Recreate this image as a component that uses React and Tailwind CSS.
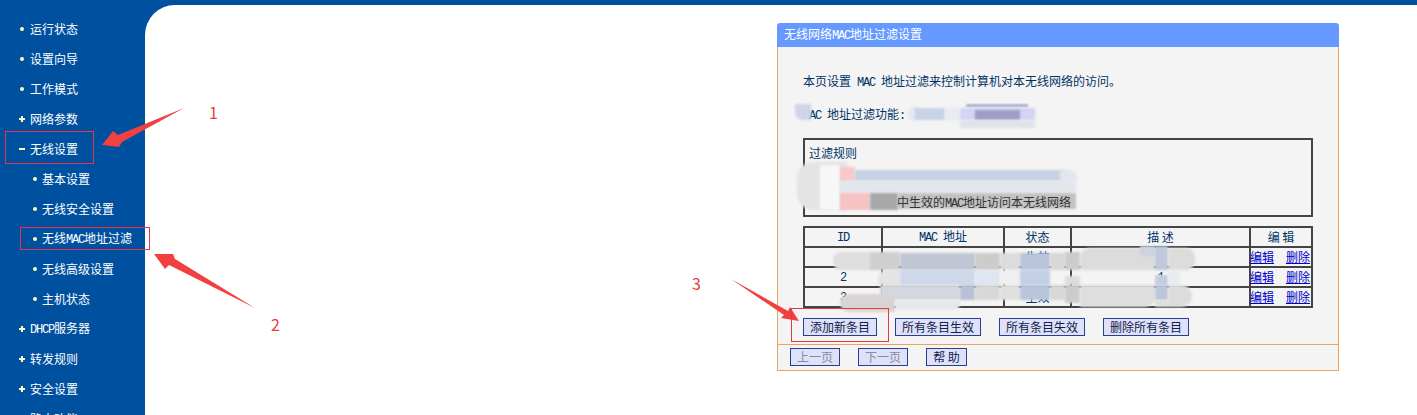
import React from 'react';

const menu = [
  { label: '运行状态', icon: 'dot' },
  { label: '设置向导', icon: 'dot' },
  { label: '工作模式', icon: 'dot' },
  { label: '网络参数', icon: 'plus' },
  { label: '无线设置', icon: 'minus' },
  { label: '基本设置', icon: 'dot', sub: true },
  { label: '无线安全设置', icon: 'dot', sub: true },
  { label: '无线MAC地址过滤', icon: 'dot', sub: true },
  { label: '无线高级设置', icon: 'dot', sub: true },
  { label: '主机状态', icon: 'dot', sub: true },
  { label: 'DHCP服务器', icon: 'plus' },
  { label: '转发规则', icon: 'plus' },
  { label: '安全设置', icon: 'plus' },
  { label: '路由功能', icon: 'plus' },
];

// half width latin, the page uses a bitmap font where these are 6px wide
function Latin({ children }) {
  return <span className="font-['Liberation_Mono',monospace] text-[12px] tracking-[-1.2px] whitespace-pre">{children}</span>;
}

function withLatin(text) {
  return text.split(/([A-Z]+)/).map((part, i) =>
    /^[A-Z]+$/.test(part) ? <Latin key={i}>{part}</Latin> : part
  );
}

function MenuIcon({ type }) {
  if (type === 'plus') {
    return (
      <svg width="6" height="6" viewBox="0 0 6 6" className="shrink-0">
        <path d="M0 2h2V0h2v2h2v2H4v2H2V4H0z" fill="#ffffcc" />
      </svg>
    );
  }
  if (type === 'minus') return <span className="w-[6px] h-[2px] bg-[#ffffcc] shrink-0" />;
  return <span className="w-[4px] h-[4px] mx-px rounded-full bg-[#ffffbb] shrink-0" />;
}

function Sidebar() {
  return (
    <nav className="w-[145px] shrink-0 pt-[9px] text-white">
      {menu.map((item) => (
        <div
          key={item.label}
          className={`h-[30px] flex items-center ${item.sub ? 'pl-[32px] gap-[4px]' : 'pl-[19px] gap-[5px]'}`}
        >
          <MenuIcon type={item.icon} />
          <span>{withLatin(item.label)}</span>
        </div>
      ))}
    </nav>
  );
}

function Btn({ children, disabled, className }) {
  return (
    <button
      className={`h-[18px] border border-[#2a3f8f] bg-[#dfe1fb] flex items-center justify-center ${
        disabled ? 'text-[#8a8a9a]' : 'text-[#10204a]'
      } ${className}`}
    >
      {children}
    </button>
  );
}

const rows = [
  { id: '', status: '生效', desc: '' },
  { id: '2', status: '', desc: '1' },
  { id: '3', status: '生效', desc: '' },
];

function RuleTable() {
  const cell = 'border-2 border-[#444444] text-center p-0';
  return (
    <table className="mt-[9px] w-[508px] table-fixed border-collapse leading-[14px] text-[#003366]">
      <colgroup>
        <col className="w-[78px]" />
        <col className="w-[122px]" />
        <col className="w-[67px]" />
        <col className="w-[179px]" />
        <col className="w-[62px]" />
      </colgroup>
      <thead>
        <tr className="h-[20px]">
          <th className={`${cell} font-normal`}><Latin>ID</Latin></th>
          <th className={`${cell} font-normal`}><Latin>MAC </Latin>地址</th>
          <th className={`${cell} font-normal`}>状态</th>
          <th className={`${cell} font-normal`}>描 述</th>
          <th className={`${cell} font-normal`}>编 辑</th>
        </tr>
      </thead>
      <tbody>
        {rows.map((row, i) => (
          <tr key={i} className="h-[20px]">
            <td className={cell}><Latin>{row.id}</Latin></td>
            <td className={cell}></td>
            <td className={cell}>{row.status}</td>
            <td className={cell}><Latin>{row.desc}</Latin></td>
            <td className={cell}>
              <div className="flex justify-between -ml-[1px] pr-[1px] text-[#0000cc] underline">
                <a>编辑</a>
                <a>删除</a>
              </div>
            </td>
          </tr>
        ))}
      </tbody>
    </table>
  );
}

function FilterPanel() {
  return (
    <section className="w-[562px] h-[348px] flex flex-col">
      <h2 className="h-[24px] shrink-0 bg-[#6699ff] rounded-t-[3px] pl-[7px] flex items-center font-normal text-white">
        <span>无线网络<Latin>MAC</Latin>地址过滤设置</span>
      </h2>
      <div className="flex-1 flex flex-col bg-[#f4f4f4] border-x border-b border-[#eea35c]">
        <div className="h-[298px] pl-[25px] pt-[26px] border-b border-[#eea35c] text-[#003366]">
          <p className="h-[16px] leading-[16px]">本页设置<Latin> MAC </Latin>地址过滤来控制计算机对本无线网络的访问。</p>
          <p className="h-[16px] leading-[16px] mt-[17px]">
            <Latin>MAC </Latin>地址过滤功能<Latin>:</Latin>
          </p>
          <div className="mt-[16px] w-[510px] h-[79px] border-2 border-[#444444] pl-[4px] pt-[5px]">
            <p className="h-[16px] leading-[16px]">过滤规则</p>
            <p className="relative z-10 mt-[33px] pl-[88px] h-[16px] leading-[16px] text-[#333333]">
              中生效的<Latin>MAC</Latin>地址访问本无线网络
            </p>
          </div>
          <RuleTable />
          <div className="mt-[10px] flex gap-[18px]">
            <Btn className="w-[74px]">添加新条目</Btn>
            <Btn className="w-[86px]">所有条目生效</Btn>
            <Btn className="w-[86px]">所有条目失效</Btn>
            <Btn className="w-[86px]">删除所有条目</Btn>
          </div>
        </div>
        <div className="pl-[12px] pt-[3px] flex gap-[18px]">
          <Btn disabled className="w-[50px]">上一页</Btn>
          <Btn disabled className="w-[50px]">下一页</Btn>
          <Btn className="w-[41px]">帮 助</Btn>
        </div>
      </div>
    </section>
  );
}

// the blurred-out areas of the screenshot, each one lies over the panel
const smears = [
  'left-[795px] top-[104px] w-[16px] h-[16px] bg-[#cdd5e6] rounded-bl-[8px]',
  'left-[908px] top-[107px] w-[10px] h-[14px] bg-[#e4e8f0] rounded-l-[6px]',
  'left-[915px] top-[108px] w-[30px] h-[12px] bg-[#c9d3e6]',
  'left-[945px] top-[108px] w-[15px] h-[12px] bg-[#e8ebf2]',
  'left-[960px] top-[108px] w-[75px] h-[12px] bg-[#d4d4f4]',
  'left-[975px] top-[110px] w-[45px] h-[10px] bg-[#a09cc4]',
  'left-[960px] top-[120px] w-[75px] h-[8px] bg-[#e2e2ea]',
  'left-[966px] top-[105px] w-[62px] h-[1px] bg-[#2a3f8f]',
  'left-[797px] top-[162px] w-[50px] h-[48px] bg-[#e4e4e4] rounded-l-[16px]',
  'left-[820px] top-[165px] w-[20px] h-[45px] bg-[#f7f7f7]',
  'left-[840px] top-[167px] w-[15px] h-[14px] bg-[#f9c8ca]',
  'left-[855px] top-[170px] w-[210px] h-[11px] bg-[#c8d2e6]',
  'left-[840px] top-[181px] w-[237px] h-[12px] bg-[#e4e6ee] rounded-r-[8px]',
  'left-[1060px] top-[170px] w-[17px] h-[11px] bg-[#e2e6ee] rounded-tr-[8px]',
  'left-[840px] top-[193px] w-[30px] h-[17px] bg-[#f6c2c4]',
  'left-[870px] top-[193px] w-[28px] h-[17px] bg-[#a8a8a8]',
  'left-[898px] top-[193px] w-[178px] h-[16px] bg-[#c2c2c2]',
  // table, top slice
  'left-[833px] top-[252px] w-[40px] h-[18px] bg-[#dedede] rounded-l-[8px]',
  'left-[870px] top-[252px] w-[30px] h-[18px] bg-[#cfcfcf]',
  'left-[900px] top-[253px] w-[75px] h-[17px] bg-[#c0c6d4]',
  'left-[975px] top-[253px] w-[25px] h-[17px] bg-[#cccccc]',
  'left-[1000px] top-[253px] w-[20px] h-[17px] bg-[#dcdcdc]',
  'left-[1020px] top-[253px] w-[30px] h-[17px] bg-[#b9c5dc]',
  'left-[1050px] top-[253px] w-[15px] h-[17px] bg-[#d8d8d8]',
  'left-[1065px] top-[252px] w-[15px] h-[18px] bg-[#cccccc]',
  'left-[1080px] top-[248px] w-[75px] h-[22px] bg-[#dcdcdc] rounded-tl-[10px]',
  'left-[1140px] top-[246px] w-[15px] h-[10px] bg-[#cdd3e0]',
  'left-[1155px] top-[246px] w-[13px] h-[24px] bg-[#c0c8dc]',
  'left-[1168px] top-[248px] w-[27px] h-[22px] bg-[#dcdcdc] rounded-r-[9px]',
  // table, middle slice
  'left-[878px] top-[270px] w-[22px] h-[15px] bg-[#e4e4e4] rounded-tl-[8px]',
  'left-[900px] top-[270px] w-[75px] h-[15px] bg-[#cdd8ea]',
  'left-[975px] top-[270px] w-[25px] h-[15px] bg-[#dfe6f2]',
  'left-[1000px] top-[270px] w-[20px] h-[15px] bg-[#f0f0f0]',
  'left-[1020px] top-[270px] w-[30px] h-[15px] bg-[#c3cfe5]',
  'left-[1065px] top-[276px] w-[15px] h-[9px] bg-[#dddddd]',
  'left-[1155px] top-[275px] w-[13px] h-[10px] bg-[#c4cde0]',
  'left-[1168px] top-[270px] w-[12px] h-[15px] bg-[#e8ecf2]',
  // table, bottom slice
  'left-[880px] top-[285px] w-[80px] h-[15px] bg-[#d4d8de]',
  'left-[960px] top-[285px] w-[15px] h-[15px] bg-[#b8c2d6]',
  'left-[975px] top-[285px] w-[25px] h-[15px] bg-[#d8d8d8]',
  'left-[1000px] top-[285px] w-[20px] h-[15px] bg-[#e0e0e0]',
  'left-[1020px] top-[285px] w-[30px] h-[15px] bg-[#bac6dc]',
  'left-[1050px] top-[285px] w-[15px] h-[15px] bg-[#d8d8d8]',
  'left-[1065px] top-[285px] w-[15px] h-[18px] bg-[#cccccc]',
  'left-[1080px] top-[285px] w-[75px] h-[22px] bg-[#dedede] rounded-br-[10px]',
  'left-[1155px] top-[285px] w-[13px] h-[15px] bg-[#bcc6da]',
  'left-[1155px] top-[300px] w-[13px] h-[7px] bg-[#dedede]',
  'left-[1168px] top-[285px] w-[24px] h-[22px] bg-[#dcdcdc] rounded-r-[10px]',
  'left-[840px] top-[294px] w-[55px] h-[18px] bg-[#d8d4d4] rounded-l-[9px]',
  'left-[895px] top-[300px] w-[65px] h-[10px] bg-[#e8e8ea] rounded-br-[6px]',
];

function Arrows() {
  return (
    <svg width="1417" height="415" className="absolute left-0 top-0 pointer-events-none">
      <path d="M184 108 L118 135 L113 131 L102 145 L119 147 L122 142 Z" fill="#f04040" />
      <path d="M255 308 L175 259 L173 254 L154 254 L165 269 L169 265 Z" fill="#f04040" />
      <path d="M731 279 L788 311 L790 307 L799 321 L781 318 L784 315 Z" fill="#f04040" />
    </svg>
  );
}

export default function App() {
  return (
    <div className="relative h-[415px] overflow-hidden bg-[#0050a0] pt-[5px] flex text-[12px] font-['Noto_Sans_CJK_SC','Liberation_Sans',sans-serif]">
      <Sidebar />
      <main className="flex-1 bg-white rounded-tl-[30px] pl-[632px] pt-[18px]">
        <FilterPanel />
      </main>
      {smears.map((s) => (
        <div key={s} className={`absolute blur-[1px] ${s}`} />
      ))}
      <Arrows />
      <div className="absolute left-[5px] top-[131px] w-[89px] h-[33px] border border-[#e8344e]" />
      <div className="absolute left-[20px] top-[227px] w-[130px] h-[23px] border border-[#e8344e]" />
      <div className="absolute left-[791px] top-[308px] w-[98px] h-[34px] border border-[#e23b3b]" />
      <span className="absolute left-[209px] top-[102px] text-[16px] leading-[20px] text-[#e84040]">1</span>
      <span className="absolute left-[271px] top-[314px] text-[16px] leading-[20px] text-[#e84040]">2</span>
      <span className="absolute left-[692px] top-[273px] text-[16px] leading-[20px] text-[#e84040]">3</span>
    </div>
  );
}
